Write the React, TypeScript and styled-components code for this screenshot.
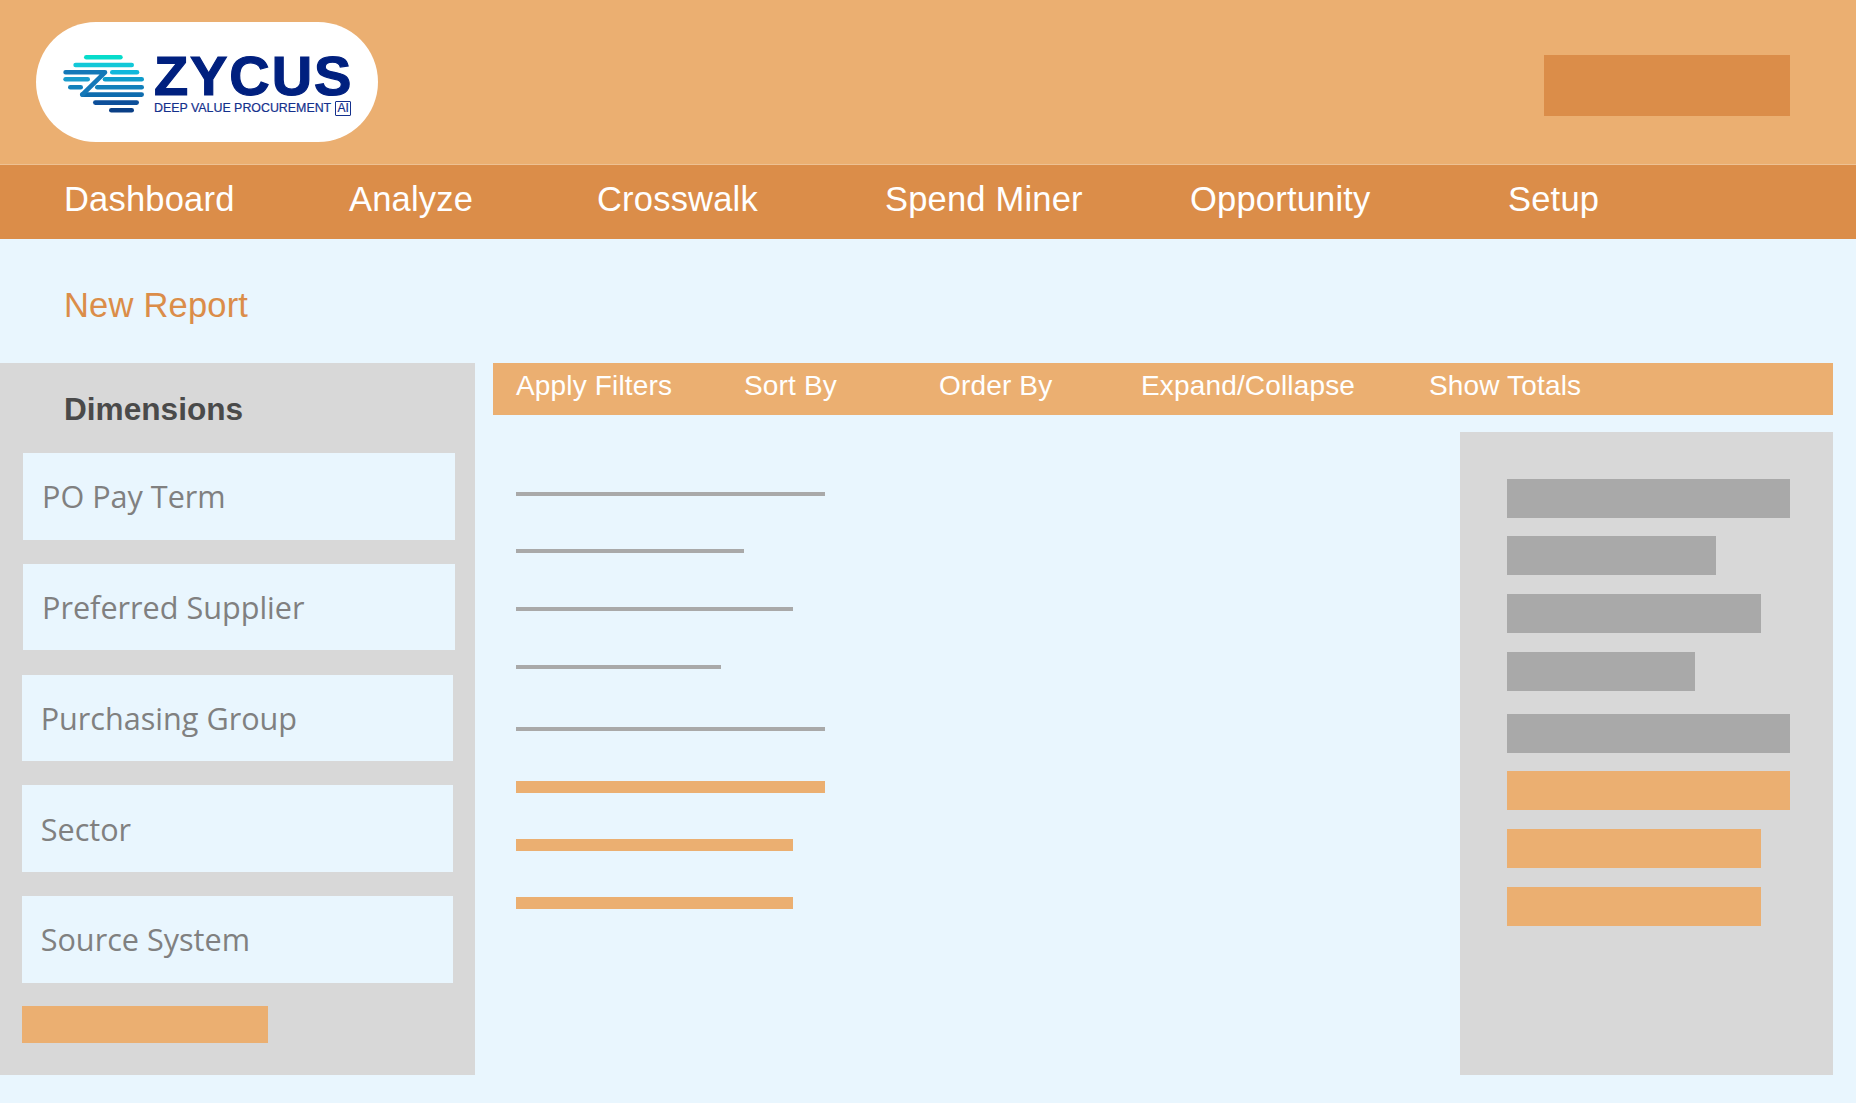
import styled, { createGlobalStyle } from "styled-components";

const ORANGE = "#ebaf71";
const DARK_ORANGE = "#db8d49";
const PAGE_BG = "#e9f6fe";
const PANEL_GREY = "#d8d8d8";
const BAR_GREY = "#a9a9a9";

const GlobalStyle = createGlobalStyle`
  html, body {
    margin: 0;
    padding: 0;
    background: ${PAGE_BG};
  }
  body {
    font-family: "Liberation Sans", Arial, sans-serif;
  }
`;

const Page = styled.div`
  width: 1856px;
  height: 1103px;
  overflow: hidden;
  background: ${PAGE_BG};
`;

const Header = styled.header`
  box-sizing: border-box;
  height: 165px;
  padding: 22px 66px 0 36px;
  background: ${ORANGE};
  border-bottom: 1px solid #eec193;
  display: flex;
  justify-content: space-between;
  align-items: flex-start;
`;

const LogoPill = styled.div`
  box-sizing: border-box;
  width: 342px;
  height: 120px;
  padding: 0 0 0 27px;
  border-radius: 60px;
  background: #ffffff;
  display: flex;
  align-items: center;
  gap: 10px;
`;

const LogoSvg = styled.svg`
  flex: none;
  margin-top: 3px;
`;

const LogoWords = styled.div`
  display: flex;
  flex-direction: column;
  margin-top: 4px;
  color: #00207f;
`;

const LogoName = styled.div`
  font-size: 56px;
  line-height: 46px;
  height: 48px;
  font-weight: 700;
  letter-spacing: 1.9px;
  -webkit-text-stroke: 1.2px #00207f;
`;

const LogoTagline = styled.div`
  display: flex;
  align-items: center;
  gap: 4px;
  font-size: 12.4px;
  line-height: 15px;
  color: #14308c;
  white-space: nowrap;
  -webkit-text-stroke: 0.2px #14308c;
`;

const AiBadge = styled.span`
  box-sizing: border-box;
  width: 16px;
  height: 15px;
  border: 1px solid #14308c;
  border-radius: 1px;
  font-size: 12px;
  line-height: 13px;
  text-align: center;
`;

const HeaderAction = styled.div`
  width: 246px;
  height: 61px;
  margin-top: 33px;
  background: ${DARK_ORANGE};
`;

const Nav = styled.nav`
  box-sizing: border-box;
  height: 74px;
  padding: 0 0 5px 64px;
  background: ${DARK_ORANGE};
  display: grid;
  grid-template-columns: 285px 248px 288px 305px 318px auto;
  align-items: center;
`;

const NavItem = styled.a`
  color: #ffffff;
  font-size: 34.5px;
  letter-spacing: 0.2px;
  white-space: nowrap;
`;

const PageTitle = styled.h1`
  box-sizing: border-box;
  height: 124px;
  margin: 0;
  padding: 44px 0 0 64px;
  font-size: 34.5px;
  line-height: 44px;
  letter-spacing: 0.2px;
  font-weight: 400;
  color: ${DARK_ORANGE};
`;

const Content = styled.div`
  display: flex;
  gap: 18px;
  padding-right: 23px;
`;

const Sidebar = styled.aside`
  box-sizing: border-box;
  flex: 0 0 475px;
  height: 712px;
  background: ${PANEL_GREY};
`;

const SidebarTitle = styled.h2`
  box-sizing: border-box;
  height: 90px;
  margin: 0;
  padding: 28px 0 0 64px;
  font-size: 31.6px;
  line-height: 36px;
  font-weight: 700;
  color: #4a4a4a;
`;

const DimensionList = styled.div`
  display: flex;
  flex-direction: column;
  gap: 24.1px;
`;

const Dimension = styled.div<{ $inset: number }>`
  box-sizing: border-box;
  width: 431.7px;
  height: 86.7px;
  margin-left: ${(p) => p.$inset}px;
  padding: 0 0 0 19px;
  background: ${PAGE_BG};
  display: flex;
  align-items: center;
  font-family: "Open Sans", sans-serif;
  font-size: 30.6px;
  color: #808080;
`;

const AddButton = styled.div`
  width: 246px;
  height: 37px;
  margin: 23px 0 0 22px;
  background: ${ORANGE};
`;

const Report = styled.main`
  flex: 1;
  min-width: 0;
`;

const Toolbar = styled.div`
  box-sizing: border-box;
  height: 52px;
  padding: 0 0 6px 23px;
  background: ${ORANGE};
  display: grid;
  grid-template-columns: 228px 195px 202px 288px auto;
  align-items: center;
`;

const ToolbarItem = styled.span`
  color: #ffffff;
  font-size: 28px;
  letter-spacing: 0.16px;
  white-space: nowrap;
`;

const ReportBody = styled.div`
  display: flex;
  justify-content: space-between;
`;

const LineList = styled.div`
  padding: 77px 0 0 23px;
`;

const Line = styled.div<{ $width: number; $top: number; $accent?: boolean }>`
  width: ${(p) => p.$width}px;
  height: ${(p) => (p.$accent ? 12 : 4)}px;
  margin-top: ${(p) => p.$top}px;
  background: ${(p) => (p.$accent ? ORANGE : BAR_GREY)};
`;

const SummaryPanel = styled.section`
  box-sizing: border-box;
  width: 373px;
  height: 643px;
  margin-top: 17px;
  padding: 46.5px 0 0 47px;
  background: ${PANEL_GREY};
`;

const SummaryBar = styled.div<{ $width: number; $top: number; $accent?: boolean }>`
  width: ${(p) => p.$width}px;
  height: 39px;
  margin-top: ${(p) => p.$top}px;
  background: ${(p) => (p.$accent ? ORANGE : BAR_GREY)};
`;

const navItems = ["Dashboard", "Analyze", "Crosswalk", "Spend Miner", "Opportunity", "Setup"];
const toolbarItems = ["Apply Filters", "Sort By", "Order By", "Expand/Collapse", "Show Totals"];

const dimensions = [
  { name: "PO Pay Term", inset: 23 },
  { name: "Preferred Supplier", inset: 23 },
  { name: "Purchasing Group", inset: 21.7 },
  { name: "Sector", inset: 21.7 },
  { name: "Source System", inset: 21.7 },
];

const lines = [
  { width: 309, top: 0 },
  { width: 228, top: 53 },
  { width: 277, top: 54 },
  { width: 205, top: 54 },
  { width: 309, top: 58 },
  { width: 309, top: 49.5, accent: true },
  { width: 277, top: 46, accent: true },
  { width: 277, top: 46, accent: true },
];

const summaryBars = [
  { width: 283, top: 0 },
  { width: 209, top: 18 },
  { width: 254, top: 19 },
  { width: 188, top: 19 },
  { width: 283, top: 23 },
  { width: 283, top: 18, accent: true },
  { width: 254, top: 19, accent: true },
  { width: 254, top: 19, accent: true },
];

const LogoMark = () => (
  <LogoSvg width="81" height="58" viewBox="0 0 81 58" fill="none" strokeWidth="4.6" strokeLinecap="round">
    <path d="M23.3 2.3H57.4" stroke="#06dccb" />
    <path d="M12.6 10H68.7" stroke="#12c8d8" />
    <path d="M49.3 17.3H74" stroke="#0fb8dc" />
    <path d="M2.6 24.3H24.7" stroke="#1a9ccc" />
    <path d="M42 24.3H78.7" stroke="#0f9ccb" />
    <path d="M7.3 32.3H17.7" stroke="#1280bb" />
    <path d="M34.3 32.3H78.7" stroke="#1280bb" />
    <path d="M19.3 39.6H78.7" stroke="#0e6cae" />
    <path d="M32.3 47.6H73.7" stroke="#0d4f9a" />
    <path d="M48.3 55.3H68.7" stroke="#0a3f86" />
    <path d="M2.6 17.3H42L19.3 39.6" stroke="#1478b8" strokeLinejoin="round" />
  </LogoSvg>
);

export default function App() {
  return (
    <Page>
      <GlobalStyle />
      <Header>
        <LogoPill>
          <LogoMark />
          <LogoWords>
            <LogoName>ZYCUS</LogoName>
            <LogoTagline>
              DEEP VALUE PROCUREMENT
              <AiBadge>AI</AiBadge>
            </LogoTagline>
          </LogoWords>
        </LogoPill>
        <HeaderAction />
      </Header>
      <Nav>
        {navItems.map((item) => (
          <NavItem key={item}>{item}</NavItem>
        ))}
      </Nav>
      <PageTitle>New Report</PageTitle>
      <Content>
        <Sidebar>
          <SidebarTitle>Dimensions</SidebarTitle>
          <DimensionList>
            {dimensions.map((d) => (
              <Dimension key={d.name} $inset={d.inset}>
                {d.name}
              </Dimension>
            ))}
          </DimensionList>
          <AddButton />
        </Sidebar>
        <Report>
          <Toolbar>
            {toolbarItems.map((item) => (
              <ToolbarItem key={item}>{item}</ToolbarItem>
            ))}
          </Toolbar>
          <ReportBody>
            <LineList>
              {lines.map((l, i) => (
                <Line key={i} $width={l.width} $top={l.top} $accent={l.accent} />
              ))}
            </LineList>
            <SummaryPanel>
              {summaryBars.map((b, i) => (
                <SummaryBar key={i} $width={b.width} $top={b.top} $accent={b.accent} />
              ))}
            </SummaryPanel>
          </ReportBody>
        </Report>
      </Content>
    </Page>
  );
}
